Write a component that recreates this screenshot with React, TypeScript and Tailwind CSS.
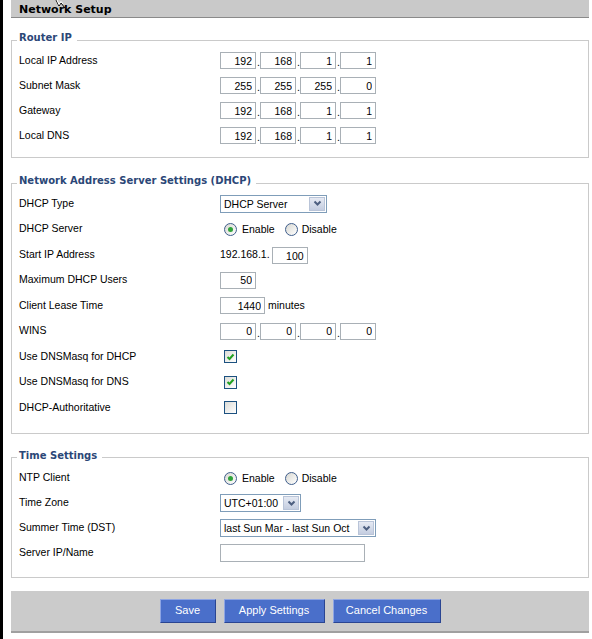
import React, { Fragment } from "react";

const sans = "font-['Liberation_Sans',Arial,sans-serif]";
const bold = "font-['DejaVu_Sans',Verdana,sans-serif] font-bold";

function Field({ value, className = "w-[36px]" }: { value: string; className?: string }) {
  return (
    <input
      readOnly
      value={value}
      className={`${className} h-[17px] border border-[#a9b0b6] bg-white pr-[3px] text-right text-[10.5px] leading-[15px] text-black outline-none ${sans}`}
    />
  );
}

function IpFields({ parts }: { parts: string[] }) {
  return (
    <div className="flex items-center">
      {parts.map((p, i) => (
        <Fragment key={i}>
          <Field value={p} />
          {i < 3 && <span className="w-[4px] self-end pl-[1px] text-[10.5px] leading-[13px]">.</span>}
        </Fragment>
      ))}
    </div>
  );
}

function Chevron() {
  return (
    <svg width="9" height="7" viewBox="0 0 9 7">
      <path d="M1.5 1.5 L4.5 4.5 L7.5 1.5" fill="none" stroke="#4d5f80" strokeWidth="2" />
    </svg>
  );
}

function Select({ value, className }: { value: string; className: string }) {
  return (
    <div className={`${className} flex h-[18px] items-stretch border border-[#7f9db9] bg-white p-[1px]`}>
      <span className="flex-1 pl-[2px] text-[10.5px] leading-[14px] text-black">{value}</span>
      <span className="flex w-[16px] items-center justify-center border border-[#b9c4d8] bg-gradient-to-b from-[#e6eaf3] to-[#c4cde0]">
        <Chevron />
      </span>
    </div>
  );
}

function Radio({ checked }: { checked?: boolean }) {
  return (
    <span className="flex h-[13px] w-[13px] items-center justify-center rounded-full border border-[#3f5e8c] bg-gradient-to-br from-[#d8d8d2] to-white">
      {checked && <span className="h-[5px] w-[5px] rounded-full bg-[#2fa33a]" />}
    </span>
  );
}

function EnableDisable() {
  return (
    <div className="flex items-center pl-[4px] text-[10.5px]">
      <Radio checked />
      <span className="ml-[5px] mt-[2px]">Enable</span>
      <span className="ml-[10px]">
        <Radio />
      </span>
      <span className="ml-[4px] mt-[2px]">Disable</span>
    </div>
  );
}

function Check({ checked }: { checked?: boolean }) {
  return (
    <span className="ml-[4px] flex h-[13px] w-[13px] items-center justify-center border border-[#1c5180] bg-gradient-to-br from-[#dcdcd7] to-white">
      {checked && (
        <svg width="9" height="8" viewBox="0 0 9 8">
          <path d="M1.5 4 L3.5 6 L7.5 1.5" fill="none" stroke="#21a121" strokeWidth="2" />
        </svg>
      )}
    </span>
  );
}

function Row({ label, className = "h-[25px]", children }: { label: string; className?: string; children?: React.ReactNode }) {
  return (
    <div className={`${className} flex items-center`}>
      <div className="w-[201px] shrink-0 text-[10.5px]">{label}</div>
      {children}
    </div>
  );
}

function Legend({ children }: { children: React.ReactNode }) {
  return (
    <legend className={`-ml-[2px] pl-[2px] pr-[5px] pb-[4px] text-[10px] leading-[12px] text-[#2b4777] ${bold}`}>
      {children}
    </legend>
  );
}

function Button({ label, className }: { label: string; className: string }) {
  return (
    <button
      className={`${className} h-[24px] border border-t-[#8ea5e3] border-l-[#8ea5e3] border-b-[#2a4592] border-r-[#2a4592] bg-[#4a6fca] text-[11px] text-white ${sans}`}
    >
      {label}
    </button>
  );
}

export default function App() {
  return (
    <div className={`relative flex min-h-[639px] bg-white text-black ${sans}`}>
      <div className="w-[3px] shrink-0 bg-black" />
      <div className="ml-[8px] w-[578px]">
        <div className={`h-[18px] border-b border-[#8a8a8a] bg-[#c9c9c9] pl-[8px] text-[11px] leading-[20px] text-black ${bold}`}>
          Network Setup
        </div>

        <fieldset className="mt-[14px] border border-[#cacaca] pb-[9px] pl-[7px] pr-2">
          <Legend>Router IP</Legend>
          <Row label="Local IP Address">
            <IpFields parts={["192", "168", "1", "1"]} />
          </Row>
          <Row label="Subnet Mask">
            <IpFields parts={["255", "255", "255", "0"]} />
          </Row>
          <Row label="Gateway">
            <IpFields parts={["192", "168", "1", "1"]} />
          </Row>
          <Row label="Local DNS">
            <IpFields parts={["192", "168", "1", "1"]} />
          </Row>
        </fieldset>

        <fieldset className="mt-[17px] border border-[#cacaca] pb-[12px] pl-[7px] pr-2">
          <Legend>Network Address Server Settings (DHCP)</Legend>
          <Row label="DHCP Type" className="h-[25.5px]">
            <Select value="DHCP Server" className="w-[107px]" />
          </Row>
          <Row label="DHCP Server" className="h-[25.5px]">
            <EnableDisable />
          </Row>
          <Row label="Start IP Address" className="h-[25.5px]">
            <span className="text-[10.5px]">192.168.1.</span>
            <span className="ml-[2px]">
              <Field value="100" />
            </span>
          </Row>
          <Row label="Maximum DHCP Users" className="h-[25.5px]">
            <Field value="50" />
          </Row>
          <Row label="Client Lease Time" className="h-[25.5px]">
            <Field value="1440" className="w-[45px]" />
            <span className="ml-[3px] text-[10.5px]">minutes</span>
          </Row>
          <Row label="WINS" className="h-[25.5px]">
            <IpFields parts={["0", "0", "0", "0"]} />
          </Row>
          <Row label="Use DNSMasq for DHCP" className="h-[25.5px]">
            <Check checked />
          </Row>
          <Row label="Use DNSMasq for DNS" className="h-[25.5px]">
            <Check checked />
          </Row>
          <Row label="DHCP-Authoritative" className="h-[25.5px]">
            <Check />
          </Row>
        </fieldset>

        <fieldset className="mt-[16px] border border-[#cacaca] pb-[11px] pl-[7px] pr-2">
          <Legend>Time Settings</Legend>
          <Row label="NTP Client">
            <EnableDisable />
          </Row>
          <Row label="Time Zone">
            <Select value="UTC+01:00" className="w-[81px]" />
          </Row>
          <Row label="Summer Time (DST)">
            <Select value="last Sun Mar - last Sun Oct" className="w-[156px]" />
          </Row>
          <Row label="Server IP/Name">
            <input readOnly className="h-[18px] w-[145px] border border-[#a9b0b6] bg-white outline-none" />
          </Row>
        </fieldset>

        <div className="mt-[13px] flex h-[42px] items-center justify-center border-b-2 border-[#a0a0a0] bg-[#cbcbcb]">
          <Button label="Save" className="w-[56px]" />
          <Button label="Apply Settings" className="ml-[8px] w-[101px]" />
          <Button label="Cancel Changes" className="ml-[8px] w-[108px]" />
        </div>
      </div>

      <svg className="absolute left-[55px] top-0" width="12" height="8" viewBox="0 0 12 8">
        <path d="M1 0 L4 6 L6 3 L10 8" fill="none" stroke="#000" strokeWidth="1" />
        <path d="M2 0 L4 4.5 L6 1.5 L8 4" fill="none" stroke="#fff" strokeWidth="1" />
      </svg>
    </div>
  );
}
